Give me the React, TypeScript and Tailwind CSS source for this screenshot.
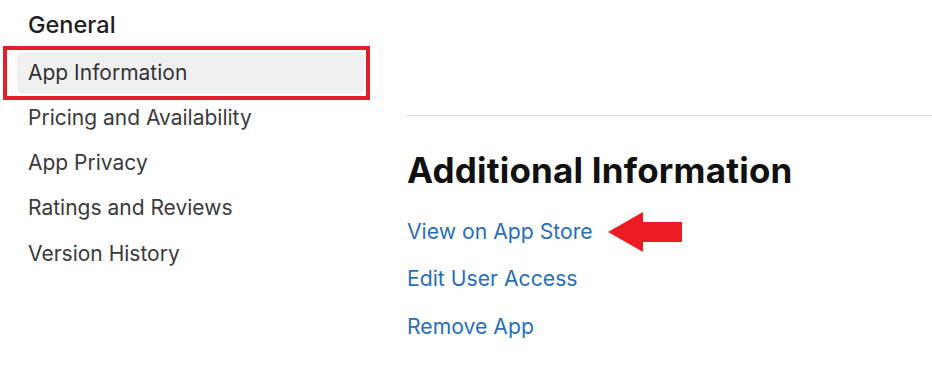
import React from 'react';

const menu = ['Pricing and Availability', 'App Privacy', 'Ratings and Reviews', 'Version History'];
const links = ['View on App Store', 'Edit User Access', 'Remove App'];

const RedArrow: React.FC = () => (
  <svg width="74" height="40" viewBox="0 0 74 40" className="ml-[15px]">
    <polygon points="0,20 35,0 35,10 74,10 74,30 35,30 35,40" fill="#ec1c24" />
  </svg>
);

export default function App() {
  return (
    <div className="w-[932px] h-[369px] bg-white flex font-['Inter',sans-serif] overflow-hidden">
      <aside className="w-[407px] shrink-0 pl-[3px] pt-[10px]">
        <h2 className="pl-[25px] text-[23.5px] font-medium text-[#1d1d1f] leading-[30px]">General</h2>
        <div className="mt-[6px] w-[367px] h-[54px] border-[4px] border-[#e41e2b] py-[2px] pl-[10px] pr-[2px]">
          <div className="h-full rounded-[6px] bg-[#f0f0f0] pl-[11px] flex items-center text-[21px] text-[#333336]">
            App Information
          </div>
        </div>
        <ul className="pl-[25px] -mt-[5px]">
          {menu.map((m) => (
            <li key={m} className="h-[45.3px] flex items-center text-[21px] text-[#3a3a3c]">
              {m}
            </li>
          ))}
        </ul>
      </aside>
      <main className="flex-1 pt-[115px]">
        <div className="border-t border-[#d6d6d6]" />
        <h1 className="mt-[34px] text-[35px] font-bold text-[#111] leading-[40px] tracking-[0.2px]">Additional Information</h1>
        <ul className="mt-[18px]">
          {links.map((l, i) => (
            <li key={l} className="h-[47.5px] flex items-center">
              <span className="text-[21.2px] text-[#2a6ebb]">{l}</span>
              {i === 0 && <RedArrow />}
            </li>
          ))}
        </ul>
      </main>
    </div>
  );
}
